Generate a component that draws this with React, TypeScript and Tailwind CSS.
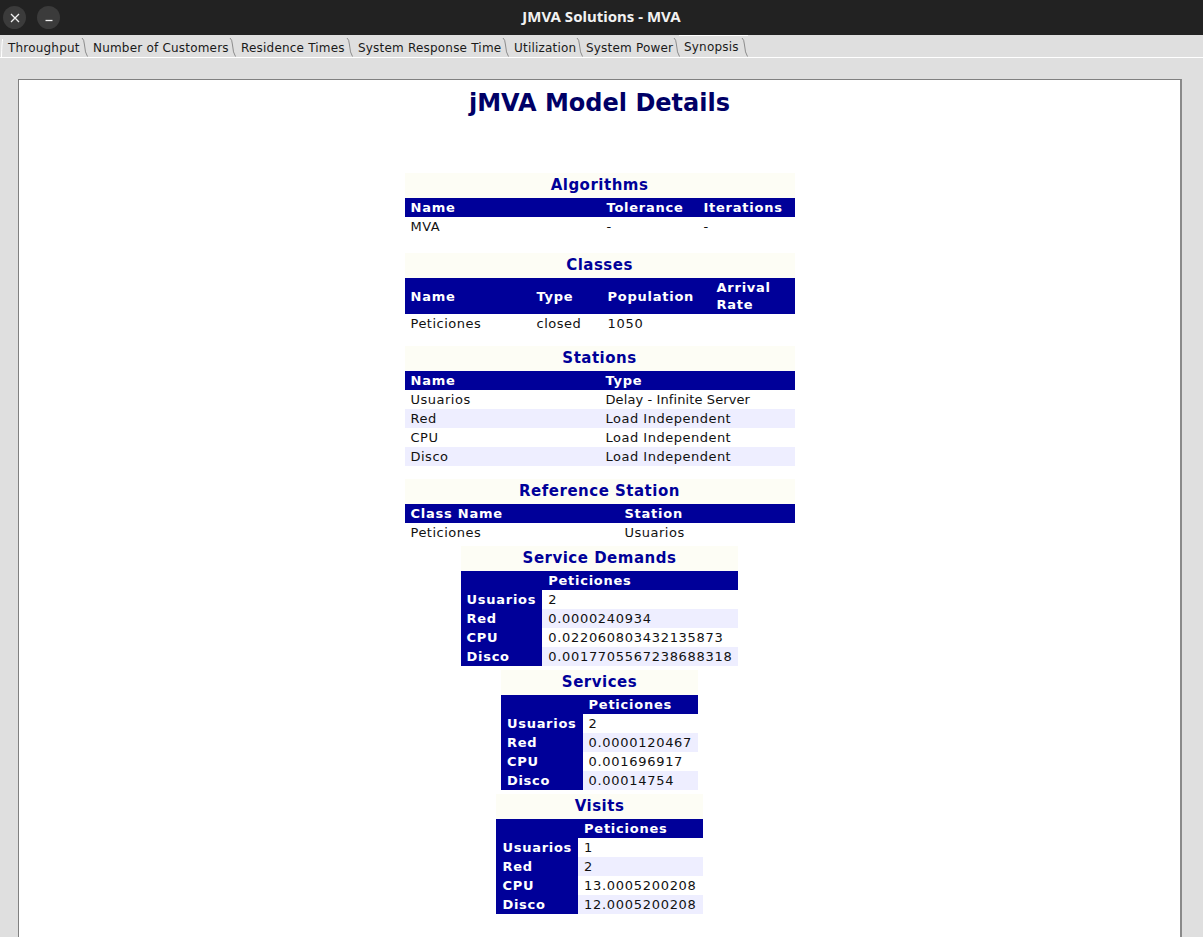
import React from 'react';

const tabs: [string, string][] = [
  ['Throughput', 'w-[85px]'],
  ['Number of Customers', 'w-[148px]'],
  ['Residence Times', 'w-[117px]'],
  ['System Response Time', 'w-[156px]'],
  ['Utilization', 'w-[72px]'],
  ['System Power', 'w-[98px]'],
  ['Synopsis', 'w-[69px]'],
];

function Slash() {
  return (
    <svg width="7" height="20" viewBox="0 0 7 20" className="shrink-0">
      <path d="M1 1 Q3 2 3.5 8 Q4 16 6.5 19.5" stroke="#8c8c8c" strokeWidth="1" fill="none" />
    </svg>
  );
}

function Cap({ children }: { children: React.ReactNode }) {
  return (
    <caption className="bg-[#fdfdf5] h-[25px] leading-[25px] text-[15px] font-bold tracking-[0.5px] text-[#000099] text-center">
      {children}
    </caption>
  );
}

const th = 'text-left font-bold tracking-[0.75px] px-[6px] py-[1px] leading-[17px] align-middle whitespace-nowrap';
const td = 'text-left tracking-[0.5px] px-[6px] py-[1px] leading-[17px] whitespace-nowrap';
const tdNum = 'text-left tracking-[0.7px] px-[6px] py-[1px] leading-[17px] whitespace-nowrap';
const tdLabel = 'text-left font-bold tracking-[0.72px] px-[6px] py-[1px] leading-[17px] whitespace-nowrap bg-[#000099] text-white';

function MatrixTable({
  title,
  rows,
  className,
}: {
  title: string;
  rows: [string, string][];
  className: string;
}) {
  return (
    <table className={`border-collapse mx-auto ${className}`}>
      <Cap>{title}</Cap>
      <thead>
        <tr className="bg-[#000099] text-white">
          <th className={th}></th>
          <th className={th}>Peticiones</th>
        </tr>
      </thead>
      <tbody>
        {rows.map(([k, v], i) => (
          <tr key={k}>
            <td className={tdLabel}>{k}</td>
            <td className={`${tdNum} ${i % 2 === 1 ? 'bg-[#eeeeff]' : 'bg-white'}`}>{v}</td>
          </tr>
        ))}
      </tbody>
    </table>
  );
}

export default function App() {
  return (
    <div
      className="w-[1203px] h-[937px] overflow-hidden flex flex-col bg-[#dfdfdf]"
      style={{ fontFamily: "'DejaVu Sans', Verdana, sans-serif" }}
    >
      {/* Title bar */}
      <div className="h-[35px] bg-[#222222] flex items-center relative shrink-0">
        <div className="flex gap-[11px] pl-[3px]">
          <div className="w-[23px] h-[23px] rounded-full bg-[#3b3b3b] flex items-center justify-center">
            <svg width="10" height="10" viewBox="0 0 10 10">
              <path d="M1 1 L9 9 M9 1 L1 9" stroke="#f0f0f0" strokeWidth="1.3" />
            </svg>
          </div>
          <div className="w-[23px] h-[23px] rounded-full bg-[#3b3b3b] flex items-center justify-center">
            <svg width="10" height="10" viewBox="0 0 10 10">
              <path d="M1.5 7.5 L8.5 7.5" stroke="#f0f0f0" strokeWidth="1.3" />
            </svg>
          </div>
        </div>
        <div
          className="absolute left-0 right-0 top-[5px] text-center text-[15px] leading-[22px] font-bold text-[#f2f2f2] pointer-events-none"
          style={{ fontFamily: "'Noto Sans', 'Open Sans', sans-serif" }}
        >
          JMVA Solutions - MVA
        </div>
      </div>

      {/* Tab strip */}
      <div className="h-[23px] shrink-0 flex items-end border-b border-white pl-[1px]">
        <svg width="2" height="19" viewBox="0 0 2 19" className="shrink-0">
          <path d="M0.5 19 Q0.8 4 1.8 1" stroke="#ffffff" strokeWidth="1" fill="none" />
        </svg>
        {tabs.map(([t, w]) => {
          const sel = t === 'Synopsis';
          return (
            <div
              key={t}
              className={`flex items-end justify-between shrink-0 ${w} ${
                sel ? 'h-[22px] border-t border-white' : 'h-[19px]'
              }`}
            >
              <span
                className={`pl-[5px] text-[12px] tracking-[0.2px] text-[#1a1a1a] whitespace-nowrap ${
                  sel ? 'leading-[20px]' : 'leading-[17px]'
                }`}
              >
                {t}
              </span>
              <Slash />
            </div>
          );
        })}
      </div>

      {/* Content */}
      <div className="flex-1 pt-[21px]">
        <div className="ml-[18px] w-[1164px] h-full bg-white border-t border-l border-[#808080] border-r-2 border-r-[#8a8a8a] text-[13px] text-[#111111]">
          <h1 className="text-center font-bold text-[24px] leading-[28px] text-[#000066] pt-[9px]">
            jMVA Model Details
          </h1>

          <table className="w-[390px] table-fixed border-collapse mx-auto mt-[56px]">
            <Cap>Algorithms</Cap>
            <colgroup>
              <col className="w-[196px]" />
              <col className="w-[97px]" />
              <col className="w-[97px]" />
            </colgroup>
            <thead>
              <tr className="bg-[#000099] text-white">
                <th className={th}>Name</th>
                <th className={th}>Tolerance</th>
                <th className={th}>Iterations</th>
              </tr>
            </thead>
            <tbody>
              <tr>
                <td className={td}>MVA</td>
                <td className={td}>-</td>
                <td className={td}>-</td>
              </tr>
            </tbody>
          </table>

          <table className="w-[390px] table-fixed border-collapse mx-auto mt-[17px]">
            <Cap>Classes</Cap>
            <colgroup>
              <col className="w-[126px]" />
              <col className="w-[71px]" />
              <col className="w-[109px]" />
              <col className="w-[84px]" />
            </colgroup>
            <thead>
              <tr className="bg-[#000099] text-white">
                <th className={th}>Name</th>
                <th className={th}>Type</th>
                <th className={th}>Population</th>
                <th className={th}>
                  Arrival
                  <br />
                  Rate
                </th>
              </tr>
            </thead>
            <tbody>
              <tr>
                <td className={td}>Peticiones</td>
                <td className={td}>closed</td>
                <td className={tdNum}>1050</td>
                <td className={td}></td>
              </tr>
            </tbody>
          </table>

          <table className="w-[390px] table-fixed border-collapse mx-auto mt-[13px]">
            <Cap>Stations</Cap>
            <colgroup>
              <col className="w-[195px]" />
              <col className="w-[195px]" />
            </colgroup>
            <thead>
              <tr className="bg-[#000099] text-white">
                <th className={th}>Name</th>
                <th className={th}>Type</th>
              </tr>
            </thead>
            <tbody>
              {[
                ['Usuarios', 'Delay - Infinite Server'],
                ['Red', 'Load Independent'],
                ['CPU', 'Load Independent'],
                ['Disco', 'Load Independent'],
              ].map(([a, b], i) => (
                <tr key={a} className={i % 2 === 1 ? 'bg-[#eeeeff]' : 'bg-white'}>
                  <td className={td}>{a}</td>
                  <td className={i === 0 ? 'text-left tracking-[0.1px] px-[6px] py-[1px] leading-[17px] whitespace-nowrap' : td}>{b}</td>
                </tr>
              ))}
            </tbody>
          </table>

          <table className="w-[390px] table-fixed border-collapse mx-auto mt-[13px]">
            <Cap>Reference Station</Cap>
            <colgroup>
              <col className="w-[214px]" />
              <col className="w-[176px]" />
            </colgroup>
            <thead>
              <tr className="bg-[#000099] text-white">
                <th className={th}>Class Name</th>
                <th className={th}>Station</th>
              </tr>
            </thead>
            <tbody>
              <tr>
                <td className={td}>Peticiones</td>
                <td className={td}>Usuarios</td>
              </tr>
            </tbody>
          </table>

          <MatrixTable
            title="Service Demands"
            className="mt-[4px]"
            rows={[
              ['Usuarios', '2'],
              ['Red', '0.0000240934'],
              ['CPU', '0.022060803432135873'],
              ['Disco', '0.0017705567238688318'],
            ]}
          />
          <MatrixTable
            title="Services"
            className="mt-[4px]"
            rows={[
              ['Usuarios', '2'],
              ['Red', '0.0000120467'],
              ['CPU', '0.001696917'],
              ['Disco', '0.00014754'],
            ]}
          />
          <MatrixTable
            title="Visits"
            className="mt-[4px]"
            rows={[
              ['Usuarios', '1'],
              ['Red', '2'],
              ['CPU', '13.0005200208'],
              ['Disco', '12.0005200208'],
            ]}
          />
        </div>
      </div>
    </div>
  );
}
